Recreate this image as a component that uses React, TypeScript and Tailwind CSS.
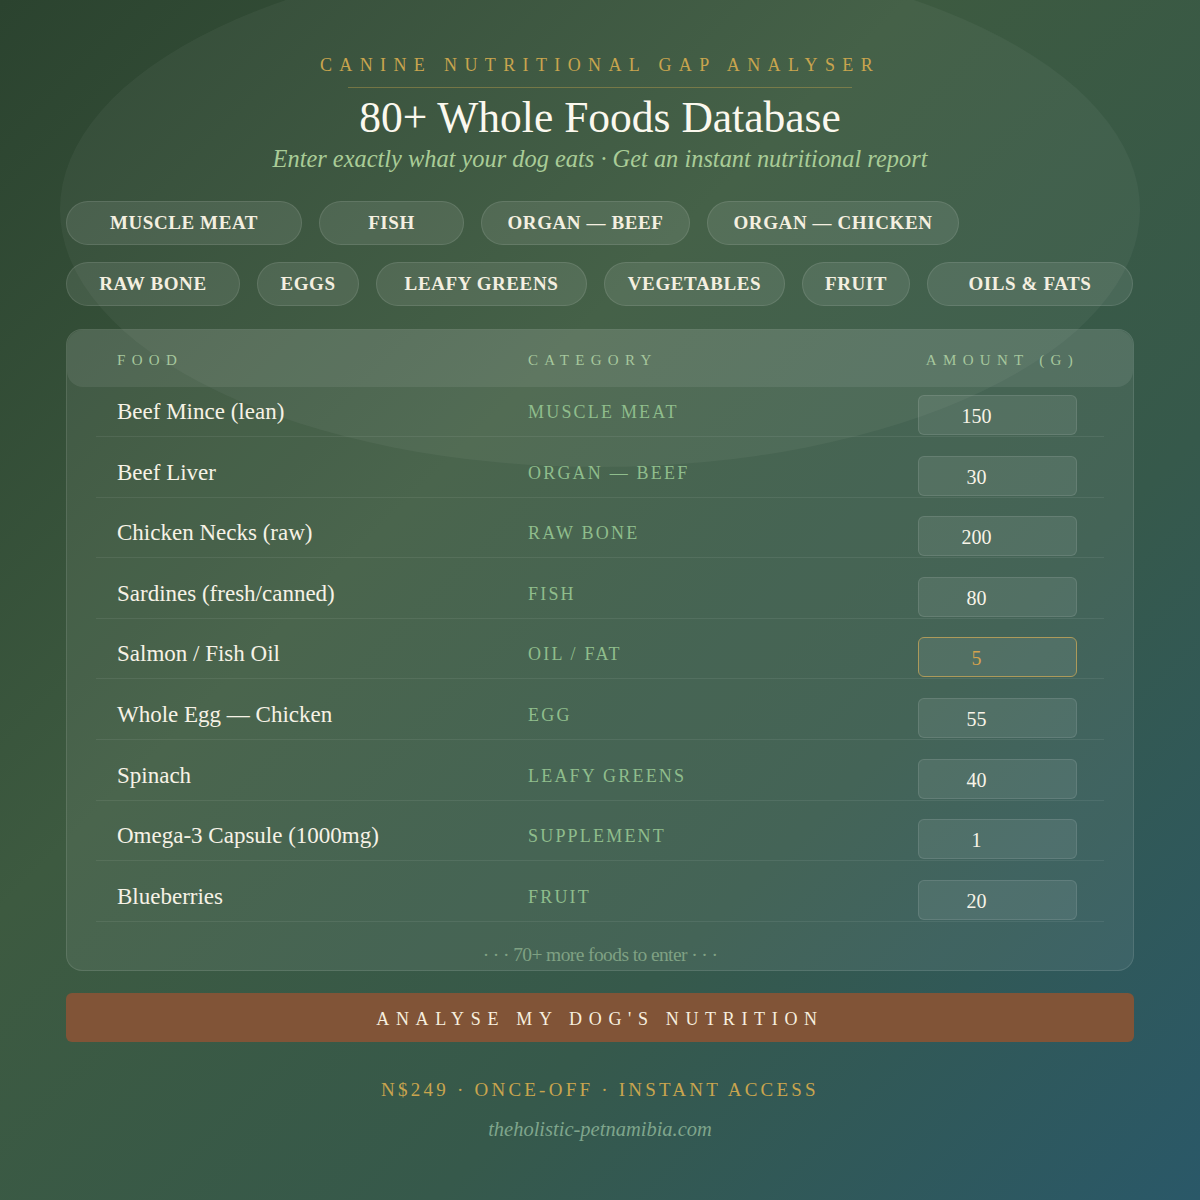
import { useState } from 'react';

const CHIPS_TOP = [
  { label: 'Muscle Meat', w: 'w-[236px]' },
  { label: 'Fish', w: 'w-[145px]' },
  { label: 'Organ — Beef', w: 'w-[209px]' },
  { label: 'Organ — Chicken', w: 'w-[252px]' },
];

const CHIPS_BOTTOM = [
  { label: 'Raw Bone', w: 'w-[174px]' },
  { label: 'Eggs', w: 'w-[102px]' },
  { label: 'Leafy Greens', w: 'w-[211px]' },
  { label: 'Vegetables', w: 'w-[181px]' },
  { label: 'Fruit', w: 'w-[108px]' },
  { label: 'Oils & Fats', w: 'w-[206px]' },
];

const FOODS = [
  { name: 'Beef Mince (lean)', category: 'Muscle Meat', amount: '150' },
  { name: 'Beef Liver', category: 'Organ — Beef', amount: '30' },
  { name: 'Chicken Necks (raw)', category: 'Raw Bone', amount: '200' },
  { name: 'Sardines (fresh/canned)', category: 'Fish', amount: '80' },
  { name: 'Salmon / Fish Oil', category: 'Oil / Fat', amount: '5' },
  { name: 'Whole Egg — Chicken', category: 'Egg', amount: '55' },
  { name: 'Spinach', category: 'Leafy Greens', amount: '40' },
  { name: 'Omega-3 Capsule (1000mg)', category: 'Supplement', amount: '1' },
  { name: 'Blueberries', category: 'Fruit', amount: '20' },
];

function Chip({ label, w }: { label: string; w: string }) {
  return (
    <button
      className={`${w} h-[44px] rounded-full border border-white/10 bg-white/[0.09] text-[19px] font-bold uppercase tracking-[0.6px] text-[#f4efe0]`}
    >
      {label}
    </button>
  );
}

export default function App() {
  const [amounts, setAmounts] = useState(FOODS.map((f) => f.amount));
  const [active, setActive] = useState(4);

  return (
    <div className="relative min-h-screen w-full overflow-hidden bg-[linear-gradient(135deg,#2b432f_0%,#3d5a40_38%,#36594b_68%,#2a5868_100%)] font-['Liberation_Serif',serif]">
      {/* soft glow behind header */}
      <div className="pointer-events-none absolute left-1/2 top-[-48px] h-[515px] w-[1080px] -translate-x-1/2 rounded-[50%] bg-white/[0.045]" />

      <div className="relative mx-auto w-[1068px] pt-[53px]">
        {/* Header */}
        <header className="flex flex-col items-center">
          <p className="text-[18px] leading-6 uppercase tracking-[0.41em] text-[#c9a54e]">
            Canine Nutritional Gap Analyser
          </p>
          <div className="mt-[10px] h-px w-[504px] bg-[#c9a54e]/40" />
          <h1 className="mt-[4px] text-[43.5px] leading-[50px] text-[#fbf8ee]">80+ Whole Foods Database</h1>
          <p className="mt-[2px] text-[24.4px] italic leading-[30px] text-[#a9cc97]">
            Enter exactly what your dog eats · Get an instant nutritional report
          </p>
        </header>

        {/* Category chips */}
        <div className="mt-[27px] flex flex-col gap-[17px]">
          <div className="flex gap-[17px]">
            {CHIPS_TOP.map((c) => (
              <Chip key={c.label} {...c} />
            ))}
          </div>
          <div className="flex gap-[17px]">
            {CHIPS_BOTTOM.map((c) => (
              <Chip key={c.label} {...c} />
            ))}
          </div>
        </div>

        {/* Food table */}
        <div className="mt-[23px] rounded-2xl border border-white/10 bg-white/[0.07]">
          <div className="grid h-[57px] grid-cols-[411px_390px_159px] items-center rounded-2xl bg-white/[0.08] pl-[50px] pt-[3px] text-[15px] uppercase tracking-[0.42em] text-[#a6c79d]">
            <span>Food</span>
            <span>Category</span>
            <span className="-mr-[2px] text-right">Amount (g)</span>
          </div>

          <div className="px-[29px]">
            {FOODS.map((f, i) => (
              <div
                key={f.name}
                className={`grid grid-cols-[411px_390px_159px] items-end border-b border-white/[0.07] pb-px pl-[21px] ${i === 0 ? 'h-[50px]' : 'h-[60.6px]'}`}
              >
                <span className="mb-[11px] text-[23px] leading-[24px] text-[#f6f2e6]">{f.name}</span>
                <span className="mb-[11px] text-[18px] uppercase leading-[24px] tracking-[2.2px] text-[#8fbd8c]">
                  {f.category}
                </span>
                <input
                  value={amounts[i]}
                  onFocus={() => setActive(i)}
                  onChange={(e) => {
                    const next = [...amounts];
                    next[i] = e.target.value;
                    setAmounts(next);
                  }}
                  className={`h-[40px] w-full rounded-md border bg-white/[0.08] pr-[42px] pt-[3px] text-center text-[20px] outline-none ${
                    active === i ? 'border-[#ad9a5a] text-[#d4a24e]' : 'border-white/10 text-[#f8f4e8]'
                  }`}
                />
              </div>
            ))}
          </div>

          <div className="flex h-[48px] items-center justify-center pt-[18px] text-[19.5px] tracking-[-0.6px] text-[#7fa183]">
            · · · 70+ more foods to enter · · ·
          </div>
        </div>

        {/* CTA */}
        <button className="mt-[22px] h-[49px] w-full rounded-md bg-[#815437] pt-[4px] text-[18px] uppercase tracking-[0.37em] text-[#f7efdf]">
          Analyse my dog's nutrition
        </button>

        {/* Footer */}
        <p className="mt-[35px] text-center text-[19px] leading-[26px] uppercase tracking-[0.17em] text-[#c9a54e]">
          N$249 · Once-off · Instant access
        </p>
        <p className="mt-[13px] text-center text-[20.5px] italic leading-[26px] text-[#7fa58c]">
          theholistic-petnamibia.com
        </p>
      </div>
    </div>
  );
}
